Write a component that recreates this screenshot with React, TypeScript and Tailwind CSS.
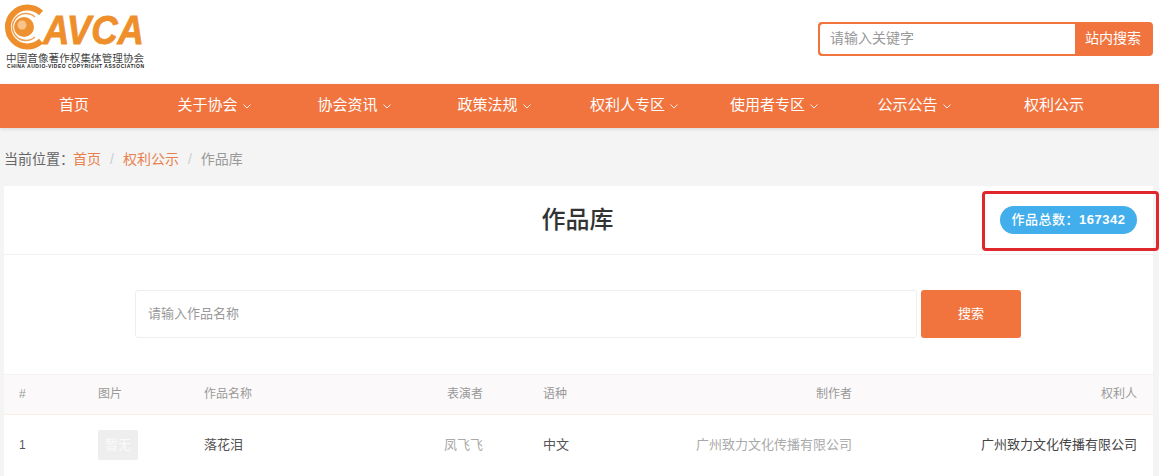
const cjk = '[font-family:"Liberation_Sans","Noto_Sans_CJK_SC",sans-serif]'

const navItems = [
  { label: '首页' },
  { label: '关于协会', sub: true },
  { label: '协会资讯', sub: true },
  { label: '政策法规', sub: true },
  { label: '权利人专区', sub: true },
  { label: '使用者专区', sub: true },
  { label: '公示公告', sub: true },
  { label: '权利公示' },
]

function Chevron() {
  return (
    <svg width="8" height="5" viewBox="0 0 8 5" fill="none" stroke="currentColor" strokeWidth="1" className="ml-[5px] mt-[1px] opacity-90">
      <path d="M0.5 0.5 L4 4 L7.5 0.5" />
    </svg>
  )
}

function Logo() {
  return (
    <div className="w-[156px] h-[70px] shrink-0">
      <svg width="156" height="70" viewBox="0 0 156 70">
        {/* ring opens to the right, the way the C does */}
        <path d="M40 13 A19.5 19.5 0 1 0 40 41" fill="none" stroke="#ee8f2c" strokeWidth="6" />
        <path d="M34 17 A13.5 13.5 0 1 0 34 37" fill="none" stroke="#f0a055" strokeWidth="1.5" />
        <circle cx="23" cy="27" r="10" fill="#ee9132" />
        <circle cx="21" cy="25" r="4.5" fill="#f8c48c" />
        <text x="42" y="44" fontFamily="Liberation Sans" fontWeight="700" fontStyle="italic" fontSize="41" textLength="101" lengthAdjust="spacingAndGlyphs" fill="#ee8f2c" stroke="#ee8f2c" strokeWidth="0.8">AVCA</text>
        <text x="5" y="62" fontFamily="Noto Sans CJK SC" fontSize="10.5" textLength="138" lengthAdjust="spacing" fill="#444">中国音像著作权集体管理协会</text>
        <text x="6" y="68" fontFamily="Liberation Sans" fontWeight="700" fontSize="5" textLength="137" lengthAdjust="spacing" fill="#222">CHINA AUDIO-VIDEO COPYRIGHT ASSOCIATION</text>
      </svg>
    </div>
  )
}

export default function App() {
  return (
    <div className={`w-[1159px] h-[476px] overflow-hidden bg-[#f4f4f4] ${cjk}`}>
      {/* top */}
      <div className="h-[84px] bg-white flex justify-between pl-[1px] pr-[6px]">
        <Logo />
        <div className="pt-[22px]">
          <div className="flex w-[335px] h-[34px] rounded-[4px] border-2 border-[#f1743f] overflow-hidden bg-[#f1743f]">
            <div className="w-[255px] bg-white rounded-l-[3px] pl-[10px] text-[14px] leading-[29px] text-[#999]">请输入关键字</div>
            <div className="flex-1 text-center text-[14px] leading-[29px] text-white">站内搜索</div>
          </div>
        </div>
      </div>

      {/* nav */}
      <div className="h-[44px] bg-[#f1743f] pl-[4px] flex shadow-[0_1px_4px_rgba(0,0,0,0.12)]">
        {navItems.map((item) => (
          <div key={item.label} className="w-[140px] pb-[1px] flex items-center justify-center text-white text-[15px]">
            {item.label}
            {item.sub && <Chevron />}
          </div>
        ))}
      </div>

      {/* crumbs */}
      <div className="h-[58px] pl-[4px] pt-[4px] flex items-center text-[14px] text-[#666]">
        <span>当前位置：</span>
        <span className="ml-[-1px] text-[#e8804d]">首页</span>
        <span className="mx-[9px] text-[#ccc]">/</span>
        <span className="text-[#e8804d]">权利公示</span>
        <span className="mx-[9px] text-[#ccc]">/</span>
        <span className="text-[#999]">作品库</span>
      </div>

      {/* card */}
      <div className="relative ml-[4px] w-[1149px] bg-white">
        <div className="relative h-[69px] border-b border-[#f1f1f1] flex items-center justify-center">
          <h1 className="text-[24px] font-medium text-[#333] pb-[1px] pr-[2px]">作品库</h1>
          <div className="absolute left-[996px] top-[20px] w-[137px] h-[28px] rounded-full bg-[#42aeec] text-white text-[13px] font-bold tracking-[0.5px] flex items-center justify-center">
            <span className="font-medium">作品总数：</span>167342
          </div>
          <div className="absolute left-[978px] top-[5px] w-[177px] h-[60px] rounded-[4px] border-[3px] border-[#e0282c]" />
        </div>

        <div className="h-[119px] flex items-center pl-[131px] pb-[2px]">
          <div className="w-[782px] h-[48px] rounded-[3px] border border-[#eeeeee] pl-[12px] text-[13px] leading-[46px] text-[#999]">请输入作品名称</div>
          <div className="ml-[4px] w-[100px] h-[48px] rounded-[3px] bg-[#f1743f] text-white text-[13px] flex items-center justify-center">搜索</div>
        </div>

        <div className="grid grid-cols-[94px_106px_199px_80px_1fr_301px] h-[41px] pb-[1px] items-center bg-[#fbf9f9] border-t border-[#f5f1f1] border-b border-b-[#fcefe9] text-[12px] text-[#999]">
          <div className="pl-[15px]">#</div>
          <div>图片</div>
          <div>作品名称</div>
          <div className="text-right">表演者</div>
          <div className="flex"><span className="pl-[60px]">语种</span><span className="ml-auto">制作者</span></div>
          <div className="text-right pr-[16px]">权利人</div>
        </div>

        <div className="grid grid-cols-[94px_106px_199px_80px_1fr_301px] h-[61px] pb-[2px] items-center text-[13px] text-[#555]">
          <div className="pl-[15px] text-[12px]">1</div>
          <div>
            <div className="w-[40px] h-[30px] rounded-[2px] bg-[#eeeeee] text-[#fafafa] text-[13px] leading-[29px] text-center">暂无</div>
          </div>
          <div className="text-[#555]">落花泪</div>
          <div className="text-right text-[#aaa]">凤飞飞</div>
          <div className="flex"><span className="pl-[60px] text-[#555]">中文</span><span className="ml-auto text-[#aaa]">广州致力文化传播有限公司</span></div>
          <div className="text-right pr-[16px] text-[#444]">广州致力文化传播有限公司</div>
        </div>
      </div>
    </div>
  )
}
